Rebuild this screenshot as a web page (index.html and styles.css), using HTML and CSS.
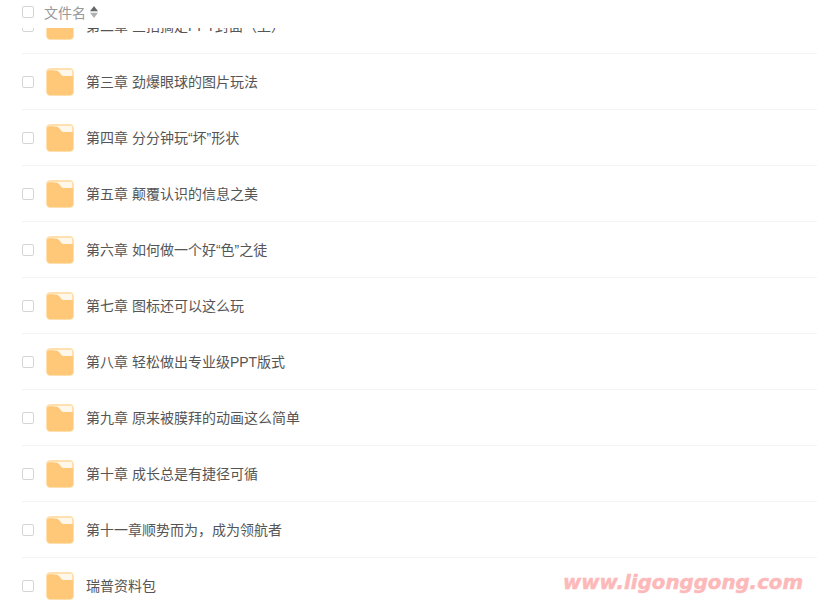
FILE: index.html
```html
<!DOCTYPE html>
<html lang="zh-CN">
<head>
    <meta charset="UTF-8">
    <title>文件列表</title>
    <link rel="stylesheet" href="styles.css">
</head>
<body>
    <div class="file-table">
        <div class="table-head">
            <span class="check"></span>
            <span class="head-name">文件名</span>
            <svg class="sort-icon" width="8" height="12" viewBox="0 0 8 12">
                <path d="M4 0 L8 5.2 H0 Z" fill="#666"/>
                <path d="M4 12 L0 6.8 H8 Z" fill="#b0b0b0"/>
            </svg>
        </div>
        <div class="table-body">
            <div class="rows">
                <div class="row">
                    <span class="check"></span>
                    <svg class="folder" viewBox="0 0 28 28"><use href="#folder-icon"/></svg>
                    <span class="name">第二章 三招搞定PPT封面（上）</span>
                </div>
                <div class="row">
                    <span class="check"></span>
                    <svg class="folder" viewBox="0 0 28 28"><use href="#folder-icon"/></svg>
                    <span class="name">第三章 劲爆眼球的图片玩法</span>
                </div>
                <div class="row">
                    <span class="check"></span>
                    <svg class="folder" viewBox="0 0 28 28"><use href="#folder-icon"/></svg>
                    <span class="name">第四章 分分钟玩“坏”形状</span>
                </div>
                <div class="row">
                    <span class="check"></span>
                    <svg class="folder" viewBox="0 0 28 28"><use href="#folder-icon"/></svg>
                    <span class="name">第五章 颠覆认识的信息之美</span>
                </div>
                <div class="row">
                    <span class="check"></span>
                    <svg class="folder" viewBox="0 0 28 28"><use href="#folder-icon"/></svg>
                    <span class="name">第六章 如何做一个好“色”之徒</span>
                </div>
                <div class="row">
                    <span class="check"></span>
                    <svg class="folder" viewBox="0 0 28 28"><use href="#folder-icon"/></svg>
                    <span class="name">第七章 图标还可以这么玩</span>
                </div>
                <div class="row">
                    <span class="check"></span>
                    <svg class="folder" viewBox="0 0 28 28"><use href="#folder-icon"/></svg>
                    <span class="name">第八章 轻松做出专业级PPT版式</span>
                </div>
                <div class="row">
                    <span class="check"></span>
                    <svg class="folder" viewBox="0 0 28 28"><use href="#folder-icon"/></svg>
                    <span class="name">第九章 原来被膜拜的动画这么简单</span>
                </div>
                <div class="row">
                    <span class="check"></span>
                    <svg class="folder" viewBox="0 0 28 28"><use href="#folder-icon"/></svg>
                    <span class="name">第十章 成长总是有捷径可循</span>
                </div>
                <div class="row">
                    <span class="check"></span>
                    <svg class="folder" viewBox="0 0 28 28"><use href="#folder-icon"/></svg>
                    <span class="name">第十一章顺势而为，成为领航者</span>
                </div>
                <div class="row">
                    <span class="check"></span>
                    <svg class="folder" viewBox="0 0 28 28"><use href="#folder-icon"/></svg>
                    <span class="name">瑞普资料包</span>
                </div>
            </div>
        </div>
    </div>
    <div class="watermark">www.ligonggong.com</div>

    <svg class="defs" width="0" height="0">
        <symbol id="folder-icon" viewBox="0 0 28 28">
            <rect x="0" y="0" width="28" height="28" rx="4.5" fill="#ffe0ae"/>
            <rect x="8" y="2" width="18" height="7" fill="#fff8ea"/>
            <path d="M1 4 Q1 2.5 2.5 2.5 H10 Q12 2.5 13.5 4.5 L15 6.5 Q16 8 18 8 H27 V24 Q27 27 24 27 H4 Q1 27 1 24 Z" fill="#ffc778"/>
        </symbol>
    </svg>
</body>
</html>
```

FILE: styles.css
```css
html, body {
    margin: 0;
    height: 100%;
    overflow: hidden;
}
body {
    position: relative;
    background-color: #fff;
    font-family: "Liberation Sans", "Noto Sans CJK SC", sans-serif;
    font-size: 14px;
    color: #555;
}
.file-table {
    display: flex;
    flex-direction: column;
    height: 100%;
}
.table-head {
    display: flex;
    align-items: center;
    height: 24px;
    padding: 0 0 4px 22px;
    color: #999;
    flex-shrink: 0;
}
.head-name {
    margin-left: 10px;
}
.sort-icon {
    margin-left: 4px;
}
.check {
    display: block;
    width: 10px;
    height: 10px;
    border: 1px solid #d5d5d5;
    border-radius: 2px;
    background-color: #fff;
    flex-shrink: 0;
}
.table-body {
    flex: 1;
    overflow: hidden;
}
.rows {
    margin-top: -30px;
    padding-left: 22px;
}
.row {
    display: flex;
    align-items: center;
    height: 55px;
    border-bottom: 1px solid #f4f4f4;
}
.folder {
    width: 28px;
    height: 28px;
    margin-left: 12px;
    flex-shrink: 0;
}
.name {
    margin: 0 0 2px 12px;
}
.defs {
    position: absolute;
}
.watermark {
    position: absolute;
    left: 563px;
    top: 571px;
    font-family: "DejaVu Sans", sans-serif;
    font-size: 19.8px;
    font-weight: bold;
    font-style: italic;
    color: #fdb9b9;
    -webkit-text-stroke: 0.5px #fdb9b9;
}
```
